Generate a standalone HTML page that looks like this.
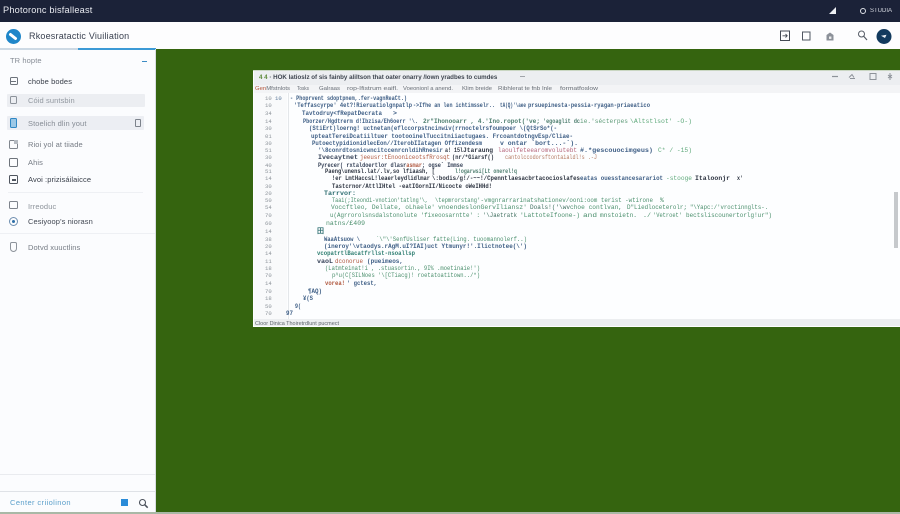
<!DOCTYPE html>
<html lang="en"><head><meta charset="utf-8"><title>Photoronc bisfalleast</title>
<style>
html,body{margin:0;padding:0;background:#35640f}
body{width:900px;height:514px;position:relative;overflow:hidden;font-family:"Liberation Sans",sans-serif}
div{position:absolute;box-sizing:border-box}
.t{white-space:nowrap;filter:blur(.3px)}
.side{font-size:7.5px;color:#767c85;left:28px;letter-spacing:.1px}
.ic{left:9px;border:1px solid #6d737b;border-radius:1.5px;width:9px;height:9px}
</style></head>
<body>
<!-- green background -->
<div style="left:155px;top:49px;width:745px;height:463px;background:#35640f"></div>
<div style="left:0;top:512px;width:900px;height:2px;background:#a9b8a6"></div>

<!-- top bar -->
<div style="left:0;top:0;width:900px;height:22px;background:#1b2238"></div>
<div class="t" style="left:3px;top:5px;font-size:9.2px;color:#e8eaf0;letter-spacing:.2px">Photoronc bisfalleast</div>
<svg style="position:absolute;left:828px;top:6px" width="10" height="9"><path d="M1 8 L8 1 L8 8Z" fill="#eef0f4"/></svg>
<div style="left:860px;top:8px;width:6px;height:6px;border:1.3px solid #dfe2e8;border-radius:50%"></div>
<div class="t" style="left:870px;top:8px;font-size:6px;color:#d5d8e0">STUDIA</div>

<!-- second bar -->
<div style="left:0;top:22px;width:900px;height:27px;background:#fdfdfe"></div>
<div style="left:0;top:48px;width:78px;height:1.5px;background:#cdd9e4"></div>
<div style="left:78px;top:48px;width:78px;height:1.5px;background:#3c9ad6"></div>
<div style="left:6px;top:29px;width:15px;height:15px;border-radius:50%;background:#1f86c9"></div>
<svg style="position:absolute;left:6px;top:29px" width="15" height="15"><path d="M4.5 5.5 L9.5 9.5" stroke="#fff" stroke-width="3" stroke-linecap="round"/></svg>
<div class="t" style="left:29px;top:31px;font-size:9px;color:#3a4150;letter-spacing:.2px">Rkoesratactic Viuiliation</div>

<!-- toolbar icons -->
<svg style="position:absolute;left:776px;top:26px" width="124" height="22" fill="none">
<rect x="4.5" y="5" width="9" height="9.5" stroke="#454b55" stroke-width="1"/>
<path d="M6.5 9.8H11M9.5 8L11.2 9.8 9.5 11.5" stroke="#454b55" stroke-width=".9"/>
<rect x="26.5" y="6" width="7.5" height="8" stroke="#505661" stroke-width="1"/>
<path d="M50.5 14.5V9L54 6.5 57.5 9V14.5Z" fill="#8c9199"/><rect x="53" y="10.5" width="2.4" height="2.4" fill="#eee"/>
<circle cx="85.5" cy="8" r="3" stroke="#555b65" stroke-width="1"/><path d="M87.8 10.4L91 14" stroke="#555b65" stroke-width="1.2"/>
<circle cx="108" cy="10.5" r="7.5" fill="#123a5e"/><path d="M105 9.8L110.5 8.8 109 12Z" fill="#e8edf2"/>
</svg>

<!-- sidebar -->
<div style="left:0;top:49.5px;width:155px;height:462.5px;background:#fbfcfe"></div>
<div style="left:155px;top:49px;width:1px;height:463px;background:#d9dde3"></div>
<div class="t side" style="left:10px;top:56px;color:#868c95">TR hopte</div>
<div style="left:142px;top:61px;width:5px;height:1.3px;background:#3c8cc4"></div>
<div class="ic" style="top:77px;width:8px;height:8px;left:10px"></div><div style="left:11px;top:81px;width:5px;height:1px;background:#6d737b"></div>
<div class="t side" style="top:77px;color:#3a404b">chobe bodes</div>
<div style="left:7px;top:94px;width:138px;height:13px;background:#eceef2;border-radius:1px"></div>
<div class="ic" style="top:96px;width:7px;height:8px;left:10px;border-color:#8d939b"></div>
<div class="t side" style="top:96px;color:#9298a0">Cóid suntsbin</div>
<div style="left:7px;top:116px;width:137px;height:14px;background:#eceef3;border-radius:1px"></div>
<div style="left:10px;top:118px;width:7px;height:10px;border:1px solid #2f87c4;border-radius:1.5px;background:#9cc8e6"></div>
<div class="t side" style="top:119px;color:#868c95">Stoelich dlin yout</div>
<div style="left:135px;top:119px;width:6px;height:8px;border:1px solid #7d838c;border-radius:1px"></div>
<div class="ic" style="top:140px;border-color:#80868e"></div><div style="left:14px;top:140px;width:4px;height:4px;background:#b5bac1"></div>
<div class="t side" style="top:140px">Rioi yol at tiiade</div>
<div class="ic" style="top:158px"></div>
<div class="t side" style="top:158px">Ahis</div>
<div class="ic" style="top:175px;border-color:#4f555f"></div><div style="left:12px;top:179px;width:4px;height:2px;border:.7px solid #4f555f"></div>
<div class="t side" style="top:175px;color:#3a404b">Avoi :prizisáilaicce</div>
<div style="left:8px;top:192px;width:135px;height:1px;background:#eef0f4"></div>
<div class="ic" style="top:201px;height:8px;border-color:#7d838c"></div>
<div class="t side" style="top:202px;color:#8d939b">Irreoduc</div>
<div style="left:9px;top:217px;width:9px;height:9px;border:1px solid #6f8fb0;border-radius:50%"></div>
<div style="left:12px;top:220px;width:3px;height:3px;background:#2e6fa8;border-radius:50%"></div>
<div class="t side" style="top:217px;color:#424853">Cesiyoop's niorasn</div>
<div style="left:0;top:233px;width:155px;height:1px;background:#eef0f4"></div>
<div style="left:10px;top:242px;width:7px;height:10px;border:1px solid #8d939b;border-radius:2px 2px 4px 4px"></div>
<div class="t side" style="top:243px">Dotvd xuuctlins</div>
<div style="left:0;top:474px;width:155px;height:1px;background:#e9ebef"></div>
<div style="left:0;top:491px;width:155px;height:1px;background:#dfe2e7"></div>
<div class="t" style="left:10px;top:498px;font-size:7.5px;color:#5b9fca;letter-spacing:.4px">Center criiolinon</div>
<div style="left:121px;top:499px;width:7px;height:7px;background:#2a8bd8"></div>
<svg style="position:absolute;left:138px;top:498px" width="11" height="11" fill="none"><circle cx="4.5" cy="4.5" r="3" stroke="#4a505a" stroke-width="1.1"/><path d="M6.8 6.8L9.7 9.7" stroke="#4a505a" stroke-width="1.5"/></svg>

<!-- code window -->
<div style="left:253px;top:70px;width:647px;height:257px;background:#fdfeff;border-top:1px solid #c9d6c2"></div>
<div style="left:254px;top:71px;width:646px;height:14px;background:#eceef1"></div>
<div style="left:254px;top:85px;width:646px;height:8px;background:#f3f4f6"></div>
<div style="left:254px;top:93px;width:33px;height:226px;background:#f9fafb"></div>
<div style="left:288px;top:93px;width:1px;height:226px;background:#e4e7ea"></div>
<div style="left:254px;top:319px;width:646px;height:7px;background:#eceef0"></div>
<div style="left:894px;top:192px;width:4px;height:56px;background:#c6c9cc"></div>
<div class="t" style="left:259px;top:74px;font-size:6.2px;font-weight:bold;color:#3f4650"><span style="color:#5d8a3a">4 4</span> · HOK latioslz of sis fainby aliltson that oater onarry /lown yradbes to cumdes</div>
<div style="left:520px;top:76px;width:5px;height:1px;background:#a0a4aa"></div>
<svg style="position:absolute;left:825px;top:71px" width="70" height="12" fill="none" stroke="#8d9299" stroke-width="1">
<path d="M7 5.5H13" stroke-width="1.2"/><path d="M24 6.5L27 3.5 29 6.5M25 7.5H30"/><rect x="45" y="2.5" width="6" height="6"/><path d="M65 2V9M63 4L67 7M67 4L63 7"/>
</svg>

<svg style="position:absolute;left:0;top:0;filter:blur(.28px)" width="900" height="514" font-family="'Liberation Mono',monospace" font-size="6.6">
<g font-family="'Liberation Sans',sans-serif" font-size="5.4" fill="#676d75">
<text x="255" y="90" textLength="35" lengthAdjust="spacingAndGlyphs"><tspan fill="#b4563c">Gen</tspan>Mfstnlots</text>
<text x="297" y="90" textLength="12" lengthAdjust="spacingAndGlyphs">Tosks</text>
<text x="319" y="90" textLength="21" lengthAdjust="spacingAndGlyphs">Galraas</text>
<text x="347" y="90" textLength="51" lengthAdjust="spacingAndGlyphs">rop-Ifistrum eaifl.</text>
<text x="403" y="90" textLength="50" lengthAdjust="spacingAndGlyphs">Voeonionl a anend.</text>
<text x="462" y="90" textLength="30" lengthAdjust="spacingAndGlyphs">Klim breide</text>
<text x="498" y="90" textLength="54" lengthAdjust="spacingAndGlyphs">Ribhlerat te fnb Inle</text>
<text x="560" y="90" textLength="38" lengthAdjust="spacingAndGlyphs">formatfoslow</text>
<text x="255" y="325" textLength="84" lengthAdjust="spacingAndGlyphs" fill="#5f656d">Cloor Dinica Thoiretrdlunt pucmect</text>
</g>
<g font-size="5.6" fill="#8f959c">
<text x="265" y="100">10</text><text x="275" y="100" fill="#5d7a9a">10</text>
<text x="265" y="107">10</text><text x="265" y="115">34</text><text x="265" y="123">14</text><text x="265" y="130">30</text><text x="265" y="138">01</text><text x="265" y="145">30</text><text x="265" y="152">51</text><text x="265" y="159">30</text><text x="265" y="167">40</text><text x="265" y="173">51</text><text x="265" y="180">14</text><text x="265" y="188">30</text><text x="265" y="195">20</text><text x="265" y="202">50</text><text x="265" y="209">54</text><text x="265" y="217">70</text><text x="265" y="225">60</text><text x="265" y="233">14</text><text x="265" y="241">38</text><text x="265" y="248">20</text><text x="265" y="255">14</text><text x="265" y="263">11</text><text x="265" y="270">18</text><text x="265" y="277">70</text><text x="265" y="285">14</text><text x="265" y="293">70</text><text x="265" y="300">18</text><text x="265" y="308">50</text><text x="265" y="315">70</text>
</g>
<g fill="#3f5f86" font-weight="bold">
<text x="290" y="100" textLength="117" lengthAdjust="spacingAndGlyphs">- Phoprvent sdoptpnem,.fer-vagnReaCt.)</text>
<text x="294" y="107" textLength="118" lengthAdjust="spacingAndGlyphs">'Teffascyrpe' 4et?!Rieruatiolgnpatlp</text>
<text x="413" y="107" textLength="82" lengthAdjust="spacingAndGlyphs">-&gt;Ifhe an len ichtimsselr..</text>
<text x="500" y="107" textLength="26" lengthAdjust="spacingAndGlyphs">tA(Q)'\aee</text>
<text x="528" y="107" textLength="122" lengthAdjust="spacingAndGlyphs">prsuepinesta-pessia-ryagan-priaeatico</text>
<text x="302" y="115" textLength="80" lengthAdjust="spacingAndGlyphs">Tavtodruy&lt;fRepatDecrata</text>
<text x="393" y="115">&gt;</text>
<text x="303" y="123" textLength="115" lengthAdjust="spacingAndGlyphs">Pborzer/Hgdtrerm d!Ibzisa/Eh6oerr '\.</text>
<text x="423" y="123" textLength="117" lengthAdjust="spacingAndGlyphs" fill="#4f7f70">2r"Ihonooarr , 4.'Ino.ropot('ve;</text>
<text x="543" y="123" textLength="37" lengthAdjust="spacingAndGlyphs" fill="#4f7f70">'egoaglit dc</text>
<g font-weight="normal">
<text x="580" y="123" textLength="48" lengthAdjust="spacingAndGlyphs" fill="#5e9b78">ie.'sécterpes</text>
<text x="630" y="123" textLength="62" lengthAdjust="spacingAndGlyphs" fill="#5fa97b">\Altstlsot' -O-)</text>
</g>
<text x="309" y="130" textLength="248" lengthAdjust="spacingAndGlyphs">(StiErt)loerng! uctnetan(eflccorpstncinwiv(rrnoctelrsfoumpoer  \(QtSrSo*(-</text>
<text x="311" y="138" textLength="262" lengthAdjust="spacingAndGlyphs">upteatTereiDcatiiltuer tootooinelTuccitniiactugaes. FrcoantdotngvEsp/Cliae-</text>
<text x="312" y="145" textLength="170" lengthAdjust="spacingAndGlyphs">PutoectypidionidlecEon//IterobIIatagen Offizendesm</text>
<text x="500" y="145" textLength="78" lengthAdjust="spacingAndGlyphs">v ontar `bort...-`).</text>
<text x="318" y="152" textLength="125" lengthAdjust="spacingAndGlyphs">'\8conrdtosnicwncitccenrcnldihRnesir</text>
<text x="445" y="152" textLength="18" lengthAdjust="spacingAndGlyphs" fill="#2e3542">a! 15l</text>
<text x="463" y="152" textLength="30" lengthAdjust="spacingAndGlyphs" fill="#2e3542">Jtaraung</text>
<text x="498" y="152" textLength="79" lengthAdjust="spacingAndGlyphs" font-weight="normal" fill="#b5657a">laoulfeteearomvolutebt</text>
<text x="580" y="152" textLength="73" lengthAdjust="spacingAndGlyphs">#.*gescouocimgeus)</text>
<text x="658" y="152" textLength="34" lengthAdjust="spacingAndGlyphs" font-weight="normal" fill="#5fa97b">C* / -15)</text>
<text x="318" y="159" textLength="40" lengthAdjust="spacingAndGlyphs" fill="#38445a">Ivecaytnet</text>
<text x="360" y="159" textLength="90" lengthAdjust="spacingAndGlyphs" font-weight="normal" fill="#b0583f">jeeusr:tEnooniceotsfRrosqt</text>
<text x="452" y="159" textLength="42" lengthAdjust="spacingAndGlyphs" fill="#2e3542">(nr/*Giarsf()</text>
<text x="505" y="159" textLength="92" lengthAdjust="spacingAndGlyphs" font-weight="normal" fill="#b57a62">cantolccodorsftontaialdl!s .-J</text>
<text x="318" y="167" textLength="145" lengthAdjust="spacingAndGlyphs" fill="#38445a">Pyrecer( rxtaldoertlor dlasr<tspan fill="#b0583f">asmar</tspan>; ogse` Immse</text>
<text x="325" y="173" textLength="110" lengthAdjust="spacingAndGlyphs" fill="#2e3542">Paeng\unensl.lat/.lv,so lfiaash,  [</text>
<text x="455" y="173" textLength="62" lengthAdjust="spacingAndGlyphs" fill="#4f7f70">l!ogarwsi[Lt onerel!q</text>
<text x="332" y="180" textLength="98" lengthAdjust="spacingAndGlyphs" fill="#2e3542">!er LmtHaccsL!leaerleydlidlmar</text>
<text x="432" y="180" textLength="148" lengthAdjust="spacingAndGlyphs" fill="#2e3542">\:bodis/g!/-~~!/Cpenntlaesacbrtacocioslafes</text>
<text x="580" y="180" textLength="83" lengthAdjust="spacingAndGlyphs">eatas ouesstancesarariot</text>
<text x="666" y="180" textLength="26" lengthAdjust="spacingAndGlyphs" font-weight="normal" fill="#5fa97b">-stooge</text>
<text x="695" y="180" textLength="35" lengthAdjust="spacingAndGlyphs" fill="#2e3542">Italoonjr</text>
<text x="737" y="180" textLength="6" lengthAdjust="spacingAndGlyphs" fill="#2e3542">x'</text>
<text x="332" y="188" textLength="160" lengthAdjust="spacingAndGlyphs" fill="#2e3542">Tastcrnor/AttlIHtel -eatIGornII/Nicocte oWeIHHd!</text>
<text x="324" y="195" textLength="32" lengthAdjust="spacingAndGlyphs" fill="#2f6f72">Tarrvor:</text>
<g fill="#4a8f6c" font-weight="normal">
<text x="332" y="202" textLength="96" lengthAdjust="spacingAndGlyphs">Taai(;Iteondi-vnotion'tatlng'\,</text>
<text x="435" y="202" textLength="42" lengthAdjust="spacingAndGlyphs">\tepmrorstang</text>
<text x="477" y="202" textLength="103" lengthAdjust="spacingAndGlyphs">'-vmgnrarrarinatshationev/oon</text>
<text x="580" y="202" textLength="73" lengthAdjust="spacingAndGlyphs">i:oom terist -wtirone</text>
<text x="660" y="202">%</text>
<text x="331" y="209" textLength="104" lengthAdjust="spacingAndGlyphs">Voccftleo, Dellate, oLhaele'</text>
<text x="438" y="209" textLength="89" lengthAdjust="spacingAndGlyphs">vnoendeslonGervIliansz'</text>
<text x="530" y="209" textLength="40" lengthAdjust="spacingAndGlyphs" fill="#3f6f5f">Doals!('\wv</text>
<text x="570" y="209" textLength="52" lengthAdjust="spacingAndGlyphs">choe contlvan,</text>
<text x="627" y="209" textLength="60" lengthAdjust="spacingAndGlyphs">D"Liedloceterolr;</text>
<text x="690" y="209" textLength="78" lengthAdjust="spacingAndGlyphs">"\Yapc:/'vroctinnglts-.</text>
<text x="330" y="217" textLength="150" lengthAdjust="spacingAndGlyphs">u(Agrrorolsnsdalstonolute 'fixeoosarntte' :</text>
<text x="483" y="217" textLength="34" lengthAdjust="spacingAndGlyphs" fill="#3f6f5f">'\Jaetratk</text>
<text x="520" y="217" textLength="60" lengthAdjust="spacingAndGlyphs">'LattoteIfoone-)</text>
<text x="583" y="217" textLength="14" lengthAdjust="spacingAndGlyphs">and</text>
<text x="600" y="217" textLength="37" lengthAdjust="spacingAndGlyphs">mnstoietn.</text>
<text x="643" y="217" textLength="8" lengthAdjust="spacingAndGlyphs">./</text>
<text x="653" y="217" textLength="29" lengthAdjust="spacingAndGlyphs">'Vetroet'</text>
<text x="686" y="217" textLength="86" lengthAdjust="spacingAndGlyphs">bectsliscounertorlg!ur")</text>
<text x="326" y="225" textLength="39" lengthAdjust="spacingAndGlyphs">natns/£409</text>
</g>
<text x="317" y="233" font-size="7" fill="#2f6f72">田</text>
<text x="324" y="241" textLength="36" lengthAdjust="spacingAndGlyphs">WaaAtsuow \</text>
<text x="376" y="241" textLength="151" lengthAdjust="spacingAndGlyphs" font-weight="normal" fill="#4a8f6c">`\"\'SenfUsliser fatte(Ling. tuoomannolerf..)</text>
<text x="324" y="248" textLength="203" lengthAdjust="spacingAndGlyphs">(ineroy'\vtaodys.rAgM.uI?IAI)uct Ytmunyr!'.Ilictnotee(\')</text>
<text x="317" y="255" textLength="98" lengthAdjust="spacingAndGlyphs" fill="#2f7f72">vcopatrtlBacatfrllst-nsoallsp</text>
<text x="317" y="263" textLength="16" lengthAdjust="spacingAndGlyphs" fill="#38445a">vaoL</text>
<text x="335" y="263" textLength="28" lengthAdjust="spacingAndGlyphs" font-weight="normal" fill="#b0583f">dconorue</text>
<text x="367" y="263" textLength="36" lengthAdjust="spacingAndGlyphs">(pueimeos,</text>
<text x="325" y="270" textLength="155" lengthAdjust="spacingAndGlyphs" font-weight="normal" fill="#4a8f6c">(Latmteinat!i , .stuasortin., 9I%  .moetinaie!')</text>
<text x="332" y="277" textLength="148" lengthAdjust="spacingAndGlyphs" font-weight="normal" fill="#4a8f6c">p^u(C[SILNoes '\[CTiacg)! roetatoatitown../*)</text>
<text x="325" y="285" textLength="20" lengthAdjust="spacingAndGlyphs" fill="#b0583f">vorea!</text>
<text x="347" y="285" textLength="30" lengthAdjust="spacingAndGlyphs">' gctest,</text>
<text x="308" y="293" textLength="14" lengthAdjust="spacingAndGlyphs">¶AQ)</text>
<text x="303" y="300" textLength="10" lengthAdjust="spacingAndGlyphs">¥(S</text>
<text x="295" y="308" textLength="6" lengthAdjust="spacingAndGlyphs">9(</text>
<text x="286" y="315" textLength="7" lengthAdjust="spacingAndGlyphs">97</text>
</g>
</svg>
</body></html>
